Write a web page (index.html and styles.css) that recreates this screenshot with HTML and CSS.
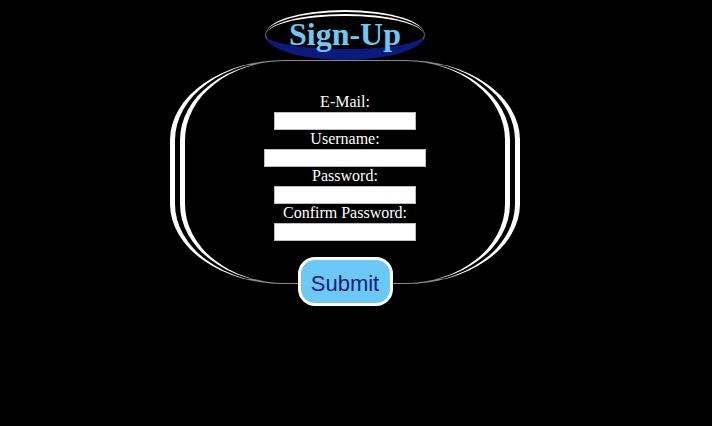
FILE: index.html
```html
<!DOCTYPE html>
<html>
<head>
<meta charset="utf-8">
<link rel="stylesheet" href="styles.css">
</head>
<body>
<div class="page">
  <h1 class="title">Sign-Up</h1>
  <form class="signup">
    <div class="oval">
      <label class="lbl">E-Mail:</label>
      <input class="field" type="email">
      <label class="lbl">Username:</label>
      <input class="field wide" type="text">
      <label class="lbl">Password:</label>
      <input class="field" type="password">
      <label class="lbl">Confirm Password:</label>
      <input class="field" type="password">
    </div>
    <button class="submit" type="button">Submit</button>
  </form>
</div>
</body>
</html>
```
FILE: styles.css
```css
html, body {
  margin: 0;
  padding: 0;
  background: #000;
}
body {
  width: 712px;
  height: 426px;
  overflow: hidden;
}
.page {
  width: 690px;
  display: flex;
  flex-direction: column;
  align-items: center;
  padding-top: 10px;
}
.title {
  margin: 0;
  box-sizing: border-box;
  width: 160px;
  height: 50px;
  padding-top: 3px;
  border-radius: 50%;
  border-top: 6px double #fff;
  border-bottom: 11px solid #0b1a7c;
  border-left: 1px solid #555;
  border-right: 1px solid #555;
  background: #000;
  color: #6cc9f6;
  font-family: "Liberation Serif", "Times New Roman", serif;
  font-weight: bold;
  font-size: 32px;
  line-height: 30px;
  text-align: center;
  position: relative;
  z-index: 2;
}
.signup {
  margin: 0;
  display: flex;
  flex-direction: column;
  align-items: center;
}
.oval {
  box-sizing: border-box;
  width: 350px;
  height: 224px;
  padding-top: 32px;
  border-left: 15px double #fff;
  border-right: 15px double #fff;
  border-top: 1px solid #8a8a8a;
  border-bottom: 1px solid #8a8a8a;
  border-radius: 115px / 80px;
  background: #000;
  display: flex;
  flex-direction: column;
  align-items: center;
}
.lbl {
  display: block;
  color: #fff;
  font-family: "Liberation Serif", "Times New Roman", serif;
  font-size: 16px;
  line-height: 18.5px;
  height: 18.5px;
}
.field {
  box-sizing: border-box;
  width: 142px;
  height: 18.5px;
  margin: 0;
  padding: 1px 2px;
  border: 1px solid #bdbdbd;
  background: #fff;
  font-size: 13px;
}
.field.wide {
  width: 162px;
}
.submit {
  position: relative;
  z-index: 2;
  margin-top: -27px;
  box-sizing: border-box;
  width: 95px;
  height: 49px;
  padding: 4px 0 0;
  border: 3px solid #fff;
  border-radius: 17px;
  background: #6cc9f6;
  color: #0b1a7c;
  font-family: "Liberation Sans", Arial, sans-serif;
  font-size: 22px;
  cursor: pointer;
}
```
